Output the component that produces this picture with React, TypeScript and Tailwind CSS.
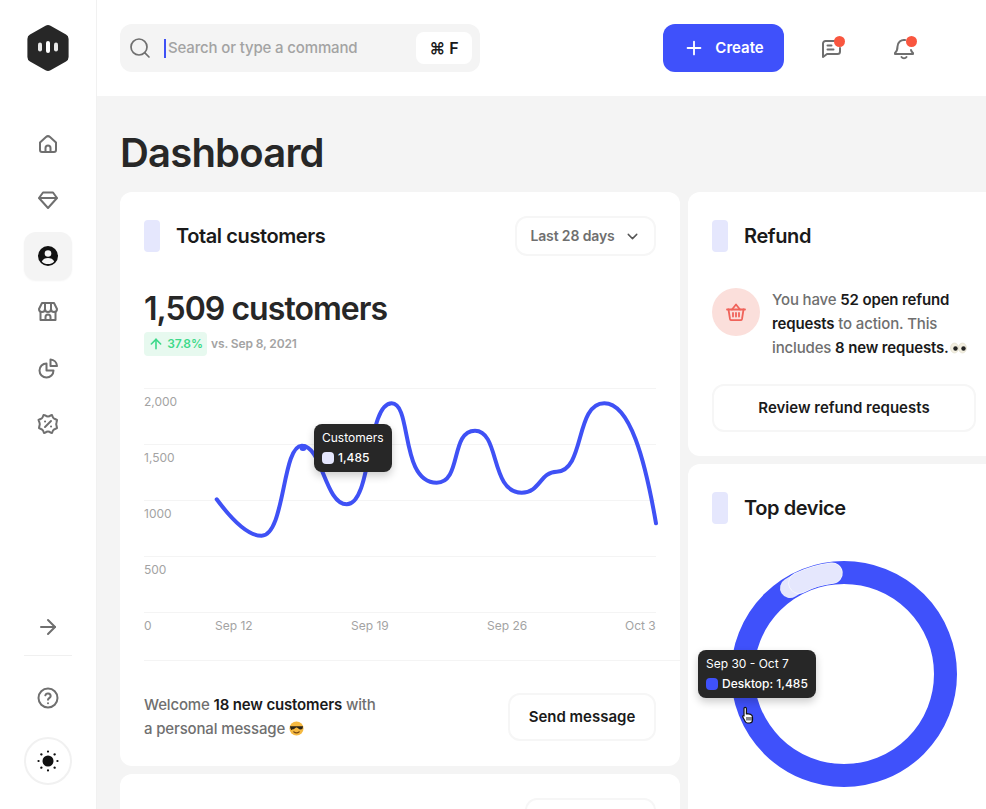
import React from "react";
import { ChevronDown, Search, Plus, ArrowRight, ArrowUp } from "lucide-react";

const font = { fontFamily: "Inter, sans-serif" };

// ── Sidebar icons ──
function NavIcon({ children }: { children: React.ReactNode }) {
  return (
    <svg width="24" height="24" viewBox="0 0 24 24" fill="none" stroke="#6f6f6f" strokeWidth="2" strokeLinecap="round" strokeLinejoin="round">
      {children}
    </svg>
  );
}

function Logo() {
  return (
    <svg width="44" height="48" viewBox="0 0 44 48">
      <path d="M19.500 1.700a5 5 0 0 1 5 0l15.500 8.900a5 5 0 0 1 2.600 4.400v18a5 5 0 0 1-2.600 4.400l-15.500 8.900a5 5 0 0 1-5 0L4 37.400a5 5 0 0 1-2.600-4.400V15A5 5 0 0 1 4 10.600z" fill="#272727" />
      <rect x="12" y="18.500" width="4" height="9" rx="2" fill="#e8e8e8" />
      <rect x="20" y="17" width="4" height="12" rx="2" fill="#fff" />
      <rect x="28" y="18.500" width="4" height="9" rx="2" fill="#e8e8e8" />
    </svg>
  );
}

function SunIcon() {
  return (
    <svg width="24" height="24" viewBox="0 0 24 24" fill="#111">
      <circle cx="12" cy="12" r="5.500" />
      <g stroke="#111" strokeWidth="2.200" strokeLinecap="round">
        <path d="M12 2.500v.1M12 21.400v.1M2.500 12h.1M21.400 12h.1M5.300 5.300l.1.1M18.600 18.600l.1.1M5.300 18.700l.1-.1M18.600 5.400l.1-.1" />
      </g>
    </svg>
  );
}

function Sidebar() {
  return (
    <aside className="flex h-[809px] w-[97px] shrink-0 flex-col items-center border-r border-[#f1f1f1] bg-white pt-6 pb-6">
      <Logo />
      <nav className="mt-[48px] flex flex-col gap-2">
        <div className="flex h-12 w-12 items-center justify-center">
          <NavIcon>
            <path d="M4 10.500 10 5a3 3 0 0 1 4 0l6 5.500V18a2 2 0 0 1-2 2H6a2 2 0 0 1-2-2z" />
            <path d="M9.500 20v-4a2.500 2.500 0 0 1 5 0v4" />
          </NavIcon>
        </div>
        <div className="flex h-12 w-12 items-center justify-center">
          <NavIcon>
            <path d="M7 4.500h10l4 5.500-9 10-9-10z" />
            <path d="M3.500 10h17" />
          </NavIcon>
        </div>
        <div className="flex h-12 w-12 items-center justify-center rounded-xl bg-[#f4f4f4] shadow-[0_1px_2px_rgba(0,0,0,0.05)]">
          <svg width="24" height="24" viewBox="0 0 24 24">
            <circle cx="12" cy="12" r="10" fill="#111" />
            <circle cx="12" cy="9.500" r="3.300" fill="#f4f4f4" />
            <path d="M5.800 17.500c1-2.500 3.500-3.500 6.200-3.500s5.200 1 6.200 3.500C16.500 19.500 14.500 20 12 20s-4.500-.5-6.200-2.500z" fill="#f4f4f4" />
          </svg>
        </div>
        <div className="flex h-12 w-12 items-center justify-center">
          <NavIcon>
            <path d="M6 3h12l3 6a3 3 0 0 1-6 0 3 3 0 0 1-6 0 3 3 0 0 1-6 0z" />
            <path d="M9 3.500V9M15 3.500V9" />
            <path d="M4.500 12v8h15v-8" />
            <path d="M9.500 20v-3a2.500 2.500 0 0 1 5 0v3" />
          </NavIcon>
        </div>
        <div className="flex h-12 w-12 items-center justify-center">
          <NavIcon>
            <path d="M10.500 7.500a7 7 0 1 0 7 7h-7z" />
            <path d="M14.500 3.500a7 7 0 0 1 6.500 6.500h-6.500z" />
          </NavIcon>
        </div>
        <div className="flex h-12 w-12 items-center justify-center">
          <NavIcon>
            <path d="M9.500 3.500a3.500 3.500 0 0 0 5 0l1.500-.5 1 2.500a4 4 0 0 0 2 1.500l2 1-.5 2.500a4 4 0 0 0 0 3l.5 2.500-2 1a4 4 0 0 0-2 1.500l-1 2.500-1.500-.5a3.500 3.500 0 0 0-5 0l-1.500.5-1-2.500a4 4 0 0 0-2-1.500l-2-1 .5-2.500a4 4 0 0 0 0-3L2.500 8l2-1a4 4 0 0 0 2-1.500l1-2.500z" />
            <path d="m9 15 6-6" />
            <path d="M9 9.500h.1M15 14.500h.1" />
          </NavIcon>
        </div>
      </nav>
      <div className="mt-auto flex w-12 flex-col items-center">
        <ArrowRight size={24} color="#6f6f6f" strokeWidth={2} />
        <div className="mt-[16px] h-px w-12 bg-[#f0f0f0]" />
        <div className="mt-[30px]">
          <svg width="24" height="24" viewBox="0 0 24 24" fill="none" stroke="#6f6f6f" strokeWidth="2" strokeLinecap="round" strokeLinejoin="round">
            <circle cx="12" cy="12" r="9.500" />
            <path d="M9.300 9.300a2.800 2.800 0 0 1 5.400.7c0 1.800-2.700 2.300-2.700 3.700" />
            <path d="M12 17.200h.01" />
          </svg>
        </div>
        <div className="mt-[27px] flex h-12 w-12 items-center justify-center rounded-full border-2 border-[#f1f1f1]">
          <SunIcon />
        </div>
      </div>
    </aside>
  );
}

// ── Top bar ──
function TopBar() {
  return (
    <header className="flex h-24 items-center bg-white pl-[23px]">
      <div className="flex h-12 w-[360px] items-center rounded-xl bg-[#f4f4f4] pr-2 pl-2">
        <Search size={24} color="#6f6f6f" strokeWidth={1.700} />
        <div className="ml-3 h-[19px] w-[2px] bg-[#3f51f5]" />
        <span className="ml-[2px] text-[15px] font-medium tracking-[-0.01em] text-[#a3a3a3]">Search or type a command</span>
        <div className="ml-auto flex h-8 w-14 items-center justify-center rounded-lg bg-white text-base font-semibold text-[#1a1a1a]">⌘ F</div>
      </div>
      <button className="ml-[183px] flex h-12 w-[121px] items-center justify-center gap-[10px] rounded-xl bg-[#3f51fb] text-[15px] font-semibold text-white">
        <Plus size={22} strokeWidth={2} />
        Create
      </button>
      <div className="relative ml-[36px] h-6 w-6">
        <svg width="24" height="24" viewBox="0 0 24 24" fill="none" stroke="#6f6f6f" strokeWidth="2" strokeLinecap="round" strokeLinejoin="round">
          <path d="M15 5H5.500A2.500 2.500 0 0 0 3 7.500V21l4-3h10.500a2.500 2.500 0 0 0 2.500-2.500V12" />
          <path d="M7.500 9.500h4M7.500 13.500h6" />
        </svg>
        <span className="absolute top-0 right-[-1px] h-[11px] w-[11px] rounded-full bg-[#f9563f]" />
      </div>
      <div className="relative ml-[48px] h-6 w-6">
        <svg width="24" height="24" viewBox="0 0 24 24" fill="none" stroke="#6f6f6f" strokeWidth="2" strokeLinecap="round" strokeLinejoin="round">
          <path d="M13 4a6.500 6.500 0 0 0-7.500 6.500c0 3.500-.8 5-2.500 6.500v1h18v-1c-1-.8-1.700-1.800-2-3" />
          <path d="M9.500 21a3 3 0 0 0 5 0" />
        </svg>
        <span className="absolute top-0 right-[-1px] h-[11px] w-[11px] rounded-full bg-[#f9563f]" />
      </div>
    </header>
  );
}

// ── Shared card bits ──
function CardTitle({ title }: { title: string }) {
  return (
    <div className="flex items-center gap-4">
      <div className="h-8 w-4 rounded bg-[#e5e7fd]" />
      <h2 className="text-xl font-semibold tracking-[-0.02em] text-[#1a1a1a]">{title}</h2>
    </div>
  );
}

function OutlineButton({ children, className }: { children: React.ReactNode; className: string }) {
  return (
    <button className={`rounded-xl border-2 border-[#f6f6f6] bg-white text-[15px] font-semibold text-[#1a1a1a] ${className}`}>
      {children}
    </button>
  );
}

function PeriodSelect() {
  return (
    <div className="flex h-10 w-[141px] items-center justify-center gap-[9px] rounded-xl border-2 border-[#f6f6f6] bg-white text-sm font-semibold tracking-[-0.01em] text-[#6f6f6f]">
      Last 28 days
      <ChevronDown size={17} color="#555" strokeWidth={2} />
    </div>
  );
}

// ── Line chart ──
const yTicks = [
  { label: "2,000", y: 388 },
  { label: "1,500", y: 444 },
  { label: "1000", y: 500 },
  { label: "500", y: 556 },
  { label: "0", y: 612 },
];

const xTicks = [
  { label: "Sep 12", x: 215 },
  { label: "Sep 19", x: 351 },
  { label: "Sep 26", x: 487 },
  { label: "Oct 3", x: 625 },
];

function Chart() {
  return (
    <div className="relative mt-[32px] h-[252px] w-[512px]">
      <svg width="512" height="252" viewBox="144 388 512 252" className="block overflow-visible">
        {yTicks.map((t) => (
          <g key={t.label}>
            <line x1="144" x2="656" y1={t.y + 0.5} y2={t.y + 0.5} stroke="#f4f4f4" />
            <text x="144" y={t.y + 18} fontSize="12" fontWeight="400" fill="#a3a3a3">{t.label}</text>
          </g>
        ))}
        {xTicks.map((t) => (
          <text key={t.label} x={t.x} y="630" fontSize="12" fontWeight="400" fill="#a3a3a3">{t.label}</text>
        ))}
        <path
          d="M216.700 499.300C232 520 248 536 261.700 535.700 285 535 282 446 301.700 445.700 322 445 325 504.300 346.700 504.300 372 504.300 367 403.300 391.700 403.300 412 403.300 400 482.700 436.700 482.700 462 482.700 450 430.700 475 430.700 500 430.700 490 492.700 521.700 492.700 540 492.700 540 472 556.700 471.700 585 471 575 403.300 604.300 403.300 630 403.300 645 460 656 523.300"
          fill="none"
          stroke="#3f51f5"
          strokeWidth="4"
          strokeLinecap="round"
        />
        <circle cx="303" cy="447.500" r="3.500" fill="#3f51f5" />
      </svg>
      <div className="absolute top-[36px] left-[170px] flex h-12 w-[78px] flex-col justify-center gap-[4px] rounded-lg bg-[#272727] pl-2 text-xs font-medium text-white shadow-[0_4px_8px_rgba(0,0,0,0.2)]">
        <span className="leading-4 font-normal">Customers</span>
        <span className="flex items-center gap-1 leading-4">
          <span className="h-3 w-3 rounded bg-[#e5e7fd]" />
          1,485
        </span>
      </div>
    </div>
  );
}

// ── Cards ──
function CustomersCard() {
  return (
    <section className="h-[574px] w-[560px] shrink-0 overflow-hidden rounded-xl bg-white pt-6">
      <div className="flex items-center justify-between px-6">
        <CardTitle title="Total customers" />
        <PeriodSelect />
      </div>
      <div className="mt-[31px] px-6">
        <div className="text-[32px] leading-[44px] font-semibold tracking-[-0.03em] text-[#272727]">1,509 customers</div>
        <div className="mt-[1px] flex items-center gap-1 text-xs font-semibold tracking-[-0.01em]">
          <span className="flex h-6 w-[63px] items-center justify-center gap-[3px] rounded bg-[#e7f9ef] text-[#3dd98a]">
            <ArrowUp size={16} strokeWidth={2.400} />
            37.8%
          </span>
          <span className="text-[#a3a3a3]">vs. Sep 8, 2021</span>
        </div>
        <Chart />
      </div>
      <div className="mt-[20px] ml-6 h-px bg-[#f4f4f4]" />
      <div className="mt-[32px] flex items-center justify-between px-6">
        <p className="text-[15px] leading-6 font-medium tracking-[-0.01em] text-[#6f6f6f]">
          Welcome <b className="font-semibold text-[#1a1a1a]">18 new customers</b> with
          <br />
          a personal message <Shades />
        </p>
        <OutlineButton className="h-12 w-[148px]">Send message</OutlineButton>
      </div>
    </section>
  );
}

function Shades() {
  return (
    <svg width="15" height="15" viewBox="0 0 16 16" className="inline-block align-[-2px]">
      <circle cx="8" cy="8" r="7.500" fill="#f5b942" />
      <path d="M1 5.500h14l-.5 2.500c-.3 1-3.500 1.500-4.500 0L8.500 7h-1L6 8c-1 1.500-4.200 1-4.500 0z" fill="#2b2318" />
      <path d="M5 11.500c2 1.500 4 1.500 6 0" fill="none" stroke="#7a4a12" strokeWidth="1.200" strokeLinecap="round" />
    </svg>
  );
}

function Eyes() {
  return (
    <svg width="17" height="12" viewBox="0 0 17 12" className="-ml-[3px] inline-block align-[-1px]">
      <ellipse cx="4.500" cy="6" rx="4" ry="5" fill="#f3efe0" stroke="#d9d4c0" strokeWidth="0.500" />
      <ellipse cx="12.500" cy="6" rx="4" ry="5" fill="#f3efe0" stroke="#d9d4c0" strokeWidth="0.500" />
      <circle cx="5.500" cy="6.500" r="2.200" fill="#222" />
      <circle cx="13.500" cy="6.500" r="2.200" fill="#222" />
    </svg>
  );
}

function RefundCard() {
  return (
    <section className="h-[264px] w-[312px] rounded-xl bg-white px-6 pt-7">
      <CardTitle title="Refund" />
      <div className="mt-[36px] flex gap-3">
        <div className="flex h-12 w-12 shrink-0 items-center justify-center rounded-full bg-[#fbdfdb]">
          <svg width="24" height="24" viewBox="0 0 24 24" fill="none" stroke="#f0635a" strokeWidth="1.800" strokeLinecap="round" strokeLinejoin="round">
            <path d="M3 9.500h18" />
            <path d="M4.500 9.500 6 19a1.500 1.500 0 0 0 1.500 1.200h9A1.500 1.500 0 0 0 18 19l1.500-9.500" />
            <path d="m8 9.500 4-5 4 5" />
            <path d="M9 13v3.500M12 13v3.500M15 13v3.500" />
          </svg>
        </div>
        <p className="w-[210px] text-[15px] leading-6 font-medium tracking-[-0.01em] whitespace-nowrap text-[#6f6f6f]">
          You have <b className="font-semibold text-[#1a1a1a]">52 open refund</b>
          <br />
          <b className="font-semibold text-[#1a1a1a]">requests</b> to action. This
          <br />
          includes <b className="font-semibold text-[#1a1a1a]">8 new requests.</b> <Eyes />
        </p>
      </div>
      <OutlineButton className="mt-[24px] h-12 w-[264px]">Review refund requests</OutlineButton>
    </section>
  );
}

function DeviceCard() {
  return (
    <section className="relative h-[400px] w-[312px] rounded-xl bg-white px-6 pt-7">
      <CardTitle title="Top device" />
      <svg width="240" height="240" viewBox="0 0 240 240" className="absolute top-[90px] left-[37px] -translate-x-px">
        <circle cx="120" cy="120" r="101.500" fill="none" stroke="#3f51fb" strokeWidth="23" />
        <path d="M66 34A101.500 101.500 0 0 1 75 29" fill="none" stroke="#e5e7fd" strokeWidth="20" strokeLinecap="round" />
        <path d="M75 29A101.500 101.500 0 0 1 108 19.200" fill="none" stroke="#f7f8fe" strokeWidth="21.500" strokeLinecap="round" />
        <path d="M75 29A101.500 101.500 0 0 1 108 19.200" fill="none" stroke="#e5e7fd" strokeWidth="20" strokeLinecap="round" />
      </svg>
      <div className="absolute top-[186px] left-[10px] flex h-12 w-[118px] flex-col justify-center gap-[4px] rounded-lg bg-[#272727] pl-2 text-xs text-white shadow-[0_4px_8px_rgba(0,0,0,0.2)]">
        <span className="leading-4">Sep 30 - Oct 7</span>
        <span className="flex items-center gap-1 leading-4 font-medium">
          <span className="h-3 w-3 rounded bg-[#3f51fb]" />
          Desktop: 1,485
        </span>
      </div>
      <svg width="16" height="18" viewBox="0 0 16 18" className="absolute top-[242px] left-[53px]">
        <path d="M3 2.500a1.200 1.200 0 0 1 2.400 0V8l1-.3 1 .2 1.300.2 1.300.5c1.200.5 1.500 1.500 1.500 3V14c0 1.500-1.200 3-3 3H6.500c-1 0-1.800-.6-2.300-1.500L1.800 11c-.5-1 .8-1.800 1.200-1z" fill="#fff" stroke="#111" strokeWidth="1.200" strokeLinejoin="round" />
        <path d="M6 11v3.500M8 11v3.500M10 11v3.500" stroke="#111" strokeWidth="1" />
      </svg>
    </section>
  );
}

// Only the top edge of this card is in the picture
function NextCard() {
  return (
    <section className="h-[200px] w-[560px] shrink-0 rounded-xl bg-white px-6 pt-6">
      <div className="flex items-start justify-between">
        <h2 className="mt-[5px] ml-8 text-xl font-semibold text-[#1a1a1a]">Traffic</h2>
        <div className="h-10 w-[131px] rounded-xl border-2 border-[#f6f6f6] bg-white" />
      </div>
    </section>
  );
}

export default function App() {
  return (
    <div className="flex h-[809px] w-[986px] overflow-hidden bg-[#f4f4f4]" style={font}>
      <Sidebar />
      <div className="min-w-0 flex-1">
        <TopBar />
        <main className="pl-[23px]">
          <h1 className="pt-[33px] pb-[15px] text-[40px] leading-[48px] font-semibold tracking-[-0.02em] text-[#272727]">Dashboard</h1>
          <div className="flex gap-2">
            <div className="flex flex-col gap-2">
              <CustomersCard />
              <NextCard />
            </div>
            <div className="flex flex-col gap-2">
              <RefundCard />
              <DeviceCard />
            </div>
          </div>
        </main>
      </div>
    </div>
  );
}
